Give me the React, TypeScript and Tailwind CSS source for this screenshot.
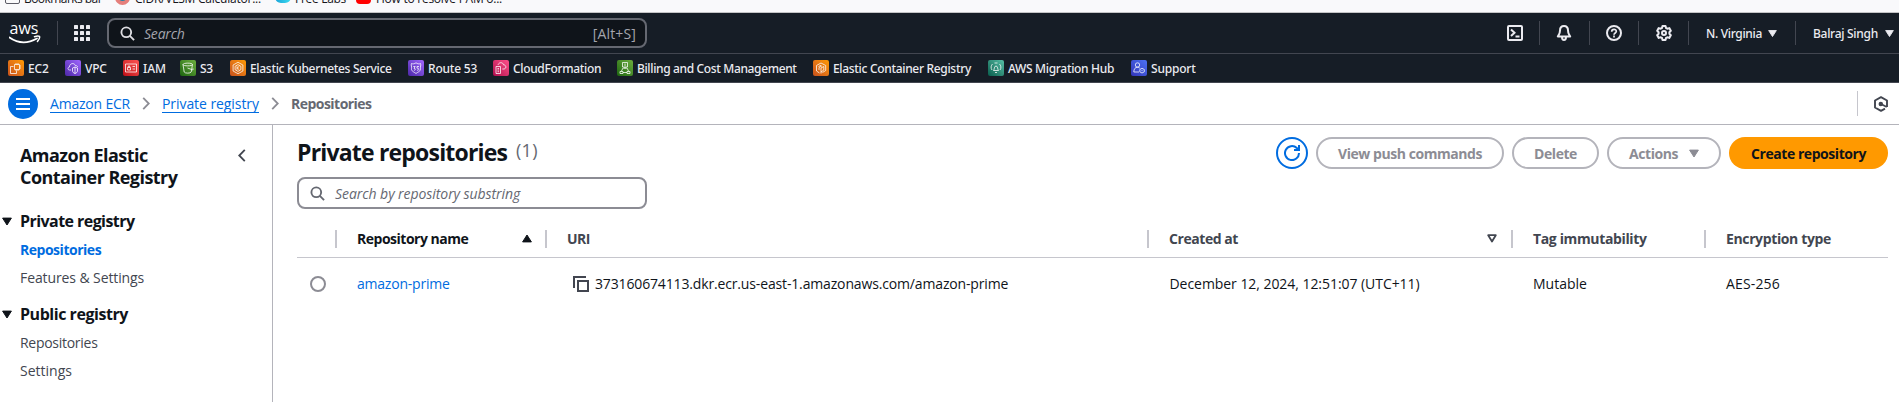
import type { ReactNode } from "react";

function SearchIcon({ className }: { className: string }) {
  return (
    <svg viewBox="0 0 16 16" className={className} fill="none" stroke="currentColor" strokeWidth="2">
      <circle cx="6.7" cy="6.7" r="5.2" />
      <path d="M10.5 10.5 15 15" />
    </svg>
  );
}

function Triangle({ className }: { className: string }) {
  return (
    <svg viewBox="0 0 10 8" className={className} fill="currentColor" stroke="currentColor" strokeWidth="1" strokeLinejoin="round">
      <path d="M.6.6h8.8L5 7.5z" />
    </svg>
  );
}

function Chevron({ className }: { className: string }) {
  return (
    <svg viewBox="0 0 8 14" className={className} fill="none" stroke="currentColor" strokeWidth="2">
      <path d="m1 1 6 6-6 6" />
    </svg>
  );
}

type Service = { name: string; cell: string; tile: string; text: string; glyph: ReactNode };

const orange = "bg-linear-to-tr from-[#c8511b] to-[#ff9900]";
const purple = "bg-linear-to-tr from-[#4d27a8] to-[#a166ff]";
const green = "bg-linear-to-tr from-[#1b660f] to-[#6cae3e]";

const services: Service[] = [
  {
    name: "EC2", cell: "w-[57px]", tile: orange, text: "tracking-[-0.2px]",
    glyph: <path d="M6.5 4.5h5v5h-5zM5.5 6.5h-3v7h6v-3M8 3v1.5M10 3v1.5M13 6h-1.5M13 8h-1.5M8 9.5V11M10 9.5V11" />,
  },
  {
    name: "VPC", cell: "w-[58px]", tile: purple, text: "tracking-[-0.2px]",
    glyph: <path d="M6 10H4.5C2.500 10 2.500 7 4.500 7 4.500 3 9.500 2.500 10.300 5.500 11.500 5.500 12.500 6 12.700 7M7.500 8l2.500-1 2.500 1v3c0 1-1 2-2.500 2.500C8.500 13 7.500 12 7.500 11zM10 7v6.500" />,
  },
  {
    name: "IAM", cell: "w-[57px]", tile: "bg-linear-to-tr from-[#bd0816] to-[#ff5252]", text: "tracking-[-0.1px]",
    glyph: <path d="M2.500 4h11v8h-11zM4.500 7.500h3v2.500h-3zM5.300 7.500V6h1.400v1.500M9.500 6.500h2.500M9.500 9h2.500" />,
  },
  {
    name: "S3", cell: "w-[50px]", tile: green, text: "tracking-[-0.3px]",
    glyph: <path d="M3 4.500c0-1.800 9.500-1.800 9.500 0s-9.500 1.800-9.500 0l1.200 7.500c.5 1.500 6.500 1.500 7 0l1.300-7.500M7.500 8l5 1.800c1 .2.800-1 .3-1.500" />,
  },
  {
    name: "Elastic Kubernetes Service", cell: "w-[178px]", tile: orange, text: "tracking-[-0.31px]",
    glyph: <path d="M8 2.300 12.900 5v6L8 13.700 3.100 11V5zM8 4.600 10.900 6.300v3.400L8 11.400 5.100 9.700V6.300zM7 6.300v3.400M9.300 6.300 7.200 8l2.100 1.700" />,
  },
  {
    name: "Route 53", cell: "w-[85px]", tile: purple, text: "tracking-[-0.2px]",
    glyph: <path d="M3.500 3.500c1.500.8 3 .3 4.500-.7 1.500 1 3 1.500 4.500.7.800 2-.5 3 0 5 .5 2.500-2.500 3.500-4.500 5-2-1.500-5-2.500-4.500-5 .5-2-.800-3 0-5zM5.300 6.500h1.900L6 8.300c1.800-.2 1.800 2 0 2M11 6.500H9v1.700c2.500-.4 2.500 2.300 0 2" />,
  },
  {
    name: "CloudFormation", cell: "w-[124px]", tile: "bg-linear-to-tr from-[#b0084d] to-[#ff4f8b]", text: "tracking-[-0.34px]",
    glyph: <path d="M3 6.500h4.500v7H3zM4.500 8.500h1.500M4.500 10h1.500M4.500 11.700h1.500M5 4.800C6 2 10 2 10.500 4.800c2.500-.2 3.500 3.700.5 4.200H9.300" />,
  },
  {
    name: "Billing and Cost Management", cell: "w-[196px]", tile: green, text: "tracking-[-0.36px]",
    glyph: <path d="M5.500 2.500h5v4.500h-5zM8 3.500v2.500M8 7v2M4.500 11 6 8h4l1.500 3M3 11.500h3v2H3zM10 11.500h3v2h-3zM6 12.500h4" />,
  },
  {
    name: "Elastic Container Registry", cell: "w-[175px]", tile: orange, text: "tracking-[-0.32px]",
    glyph: <path d="M6.500 13 3.500 11V5.500L8 3l4.700 2.500v5L9.500 12.500M6 10V7.500l3-1.700M8 13.500V8l2.800-1.500V10L8 12M5.500 6.500 8 5.300" />,
  },
  {
    name: "AWS Migration Hub", cell: "w-[143px]", tile: "bg-linear-to-tr from-[#055f4e] to-[#56c0a7]", text: "tracking-[-0.32px]",
    glyph: <path d="M5.500 10.500c1-1 .5-4.500 2.500-4.500s1.500 3.500 2.500 4.500zM7 12.500h2M4 10C2.500 8 3 5.500 4.500 4M12 10c1.500-2 1-4.500-.5-6M6.500 3h3" />,
  },
  {
    name: "Support", cell: "w-[80px]", tile: "bg-linear-to-tr from-[#3334b9] to-[#4d72f3]", text: "tracking-[-0.21px]",
    glyph: <path d="M6.500 2.800a2.200 2.200 0 1 1 0 4.400 2.200 2.200 0 0 1 0-4.400zM8 12H2.800c0-3 1.500-4.800 3.700-4.800 1 0 1.700.4 2.300 1M11 8.300l2.300 1.200v2.300L11 13l-2.200-1.200V9.500zM10.500 10.600h1" />,
  },
];

function BookmarkBar() {
  const label = "absolute -top-[9px] text-[12px] leading-[16px] whitespace-nowrap text-[#15141a]";
  return (
    <div className="relative h-[13px] shrink-0 overflow-hidden border-b border-[#c4c4c6] bg-[#f9f9fb]">
      <div className="absolute -top-[10px] left-[5px] h-[14px] w-[15px] rounded-[2px] border-[1.500px] border-[#5b5b66]" />
      <span className={`${label} left-[24px] tracking-[-0.55px]`}>Bookmarks bar</span>
      <div className="absolute -top-[10px] left-[115px] size-[15px] rounded-full border-[4px] border-[#e57f7b] bg-[#2483a6]" />
      <span className={`${label} left-[135px] tracking-[-0.23px]`}>CIDR/VLSM Calculator...</span>
      <div className="absolute -top-[9px] left-[275px] h-[12px] w-[16px] rounded-full bg-linear-to-r from-[#1aa3d8] to-[#3ddcf0]" />
      <span className={`${label} left-[295px] tracking-[-0.3px]`}>Free Labs</span>
      <div className="absolute -top-[8px] left-[356px] h-[12px] w-[15px] rounded-[4px] bg-[#f00]" />
      <span className={`${label} left-[376px] tracking-[-0.26px]`}>How to resolve PAM o...</span>
    </div>
  );
}

function VLine({ className }: { className: string }) {
  return <div className={`h-[24px] w-px shrink-0 bg-[#424650] ${className}`} />;
}

function TopBar() {
  return (
    <div className="flex h-[40px] shrink-0 items-center bg-[#161d26] text-[#ebebf0]">
      <svg viewBox="0 0 32 22" className="mt-[2px] ml-[9px] h-[22px] w-[32px] shrink-0">
        <text x="0.500" y="11" fontSize="16" fontWeight="500" fill="#fff" textLength="29" lengthAdjust="spacingAndGlyphs" fontFamily="Open Sans, sans-serif">aws</text>
        <path d="M.5 14.500c8.500 6 18.500 6 27.500 1" fill="none" stroke="#fff" strokeWidth="1.700" strokeLinecap="round" />
        <path d="M25.500 13.800c2-.9 4.300-.9 5-.4.3 1-.5 3.500-2 5" fill="none" stroke="#fff" strokeWidth="1.500" strokeLinecap="round" />
      </svg>
      <VLine className="ml-[16px]" />
      <svg viewBox="0 0 16 16" className="ml-[16px] size-[16px] shrink-0" fill="currentColor">
        {[0, 6, 12].map((y) => [0, 6, 12].map((x) => <rect key={`${x}-${y}`} x={x} y={y} width="4" height="4" rx=".6" />))}
      </svg>
      <div className="ml-[17px] flex h-[30px] w-[540px] items-center rounded-[8px] border-2 border-[#656871] bg-[#0f141a] pr-[9px] pl-[11px]">
        <SearchIcon className="size-[15px] text-[#dedee3]" />
        <span className="ml-[9px] text-[14px] tracking-[-0.2px] text-[#a4a4ad] italic">Search</span>
        <span className="ml-auto text-[14px] tracking-[0.15px] text-[#a4a4ad]">[Alt+S]</span>
      </div>
      <svg viewBox="0 0 16 16" className="ml-[860px] size-[16px] shrink-0" fill="none" stroke="currentColor" strokeWidth="2">
        <rect x="1" y="1" width="14" height="14" rx="1" />
        <path d="m4 4.500 3.500 3.300L4 11M8.500 11.500H12.500" />
      </svg>
      <VLine className="ml-[16px]" />
      <svg viewBox="0 0 16 16" className="ml-[16px] size-[16px] shrink-0" fill="none" stroke="currentColor" strokeWidth="2" strokeLinejoin="round">
        <path d="M8 1C5.500 1 4 3 4 5.500 4 8.500 3.300 9 1.800 11.500h12.400C12.700 9 12 8.500 12 5.500 12 3 10.500 1 8 1zM6 12c0 4 4 4 4 0" />
      </svg>
      <VLine className="ml-[17px]" />
      <svg viewBox="0 0 16 16" className="ml-[16px] size-[16px] shrink-0" fill="none" stroke="currentColor" strokeWidth="2">
        <circle cx="8" cy="8" r="7" />
        <path d="M5.700 6.800C5.700 3.600 10.400 3.800 10.300 6.500 10.200 8 8 8 8 9.800M8 10.500v2" strokeWidth="1.700" />
      </svg>
      <VLine className="ml-[16px]" />
      <svg viewBox="0 0 16 16" className="ml-[17px] size-[16px] shrink-0" fill="none" stroke="currentColor" strokeWidth="2" strokeLinejoin="round">
        <path d="M6.500 1h3l.5 2 1.300.7 2-.6 1.500 2.600L13.400 7.200v1.600l1.400 1.500-1.500 2.600-2-.6L10 13l-.5 2h-3L6 13l-1.300-.7-2 .6-1.500-2.600L2.600 8.800V7.200L1.200 5.700l1.500-2.600 2 .6L6 3z" />
        <circle cx="8" cy="8" r="2" />
      </svg>
      <VLine className="ml-[16px]" />
      <div className="flex w-[106px] items-center pt-px pl-[17px] font-[Noto_Sans] text-[12px] font-medium">
        <span className="w-[62px] tracking-[-0.33px] whitespace-nowrap">N. Virginia</span>
        <Triangle className="mb-px h-[7px] w-[9px]" />
      </div>
      <VLine className="" />
      <div className="flex items-center pt-px pl-[17px] font-[Noto_Sans] text-[12px] font-medium">
        <span className="w-[72px] tracking-[-0.28px] whitespace-nowrap">Balraj Singh</span>
        <Triangle className="mb-px h-[7px] w-[9px]" />
      </div>
    </div>
  );
}

function FavoritesBar() {
  return (
    <div className="flex h-[30px] shrink-0 items-center border-y border-[#424650] bg-[#161d26] pl-[8px] font-[Noto_Sans] text-[12px] font-medium text-[#ebebf0]">
      {services.map((s) => (
        <div key={s.name} className={`flex shrink-0 items-center gap-[4px] ${s.cell}`}>
          <div className={`size-[16px] shrink-0 rounded-[2px] ${s.tile}`}>
            <svg viewBox="0 0 16 16" className="size-[16px]" fill="none" stroke="#fff" strokeOpacity=".85" strokeWidth=".9">{s.glyph}</svg>
          </div>
          <span className={`mt-[2px] whitespace-nowrap ${s.text}`}>{s.name}</span>
        </div>
      ))}
    </div>
  );
}

function Breadcrumbs() {
  return (
    <div className="flex h-[42px] shrink-0 items-center border-b border-[#b4b4bb] text-[14px]">
      <div className="ml-[8px] flex size-[30px] items-center justify-center rounded-full bg-[#006ce0]">
        <svg viewBox="0 0 14 12" className="h-[12px] w-[14px]" stroke="#fff" strokeWidth="2"><path d="M0 1h14M0 6h14M0 11h14" /></svg>
      </div>
      <div className="mt-px ml-[12px] flex h-[18px] w-[80px] items-center border-b border-[#006ce0] tracking-[-0.2px] whitespace-nowrap text-[#006ce0]">Amazon ECR</div>
      <Chevron className="ml-[12px] h-[13px] w-[8px] text-[#8c8c94]" />
      <div className="mt-px ml-[12px] flex h-[18px] w-[97px] items-center border-b border-[#006ce0] tracking-[-0.07px] whitespace-nowrap text-[#006ce0]">Private registry</div>
      <Chevron className="ml-[12px] h-[13px] w-[8px] text-[#8c8c94]" />
      <span className="ml-[12px] font-bold tracking-[-0.53px] text-[#656871]">Repositories</span>
      <div className="ml-auto h-[25px] w-px bg-[#c6c6cd]" />
      <svg viewBox="0 0 16 16" className="mr-[10px] ml-[15px] size-[16px] text-[#424650]" fill="none" stroke="currentColor" strokeWidth="1.900" strokeLinejoin="round">
        <path d="M14 11V4.500L8 1.200 2 4.500v7l6 3.300 4-2.200" />
        <circle cx="7.800" cy="8" r="1.300" fill="currentColor" />
        <path d="m8 8 5.800 3" />
      </svg>
    </div>
  );
}

function NavSection({ title, titleClass, children }: { title: string; titleClass: string; children: ReactNode }) {
  return (
    <div className="mb-[10px]">
      <div className="flex h-[24px] items-center">
        <Triangle className="mr-[8px] ml-[2px] h-[9px] w-[10px] text-[#0f141a]" />
        <span className={`text-[16px] font-bold text-[#0f141a] ${titleClass}`}>{title}</span>
      </div>
      <div className="mt-[3px] pl-[20px] text-[14px] leading-[28px] text-[#424650]">{children}</div>
    </div>
  );
}

function Sidebar() {
  return (
    <aside className="w-[273px] shrink-0 border-r border-[#b4b4bb] pt-[19px]">
      <div className="mb-[21px] flex pl-[20px]">
        <h2 className="w-[218px] text-[18px] leading-[22px] font-bold tracking-[-0.55px] text-[#0f141a]">
          Amazon Elastic
          <br />
          Container Registry
        </h2>
        <Chevron className="mt-[5px] h-[13px] w-[8px] rotate-180 text-[#424650]" />
      </div>
      <NavSection title="Private registry" titleClass="tracking-[-0.56px]">
        <div className="font-bold tracking-[-0.48px] text-[#006ce0]">Repositories</div>
        <div className="tracking-[-0.1px]">Features &amp; Settings</div>
      </NavSection>
      <NavSection title="Public registry" titleClass="tracking-[-0.46px]">
        <div className="tracking-[-0.28px]">Repositories</div>
        <div>Settings</div>
      </NavSection>
    </aside>
  );
}

const outlined = "flex h-[32px] items-center justify-center rounded-full border-2 border-[#b4b4bb] text-[14px] font-bold whitespace-nowrap text-[#8c8c94]";

function Toolbar() {
  return (
    <div className="flex h-[32px]">
      <h1 className="-mt-px flex text-[23px] leading-[33px] font-bold tracking-[-0.81px] whitespace-nowrap text-[#0f141a]">
        <span className="w-[219px]">Private repositories</span>
        <span className="-mt-[2px] text-[18px] font-normal tracking-[0.3px] text-[#656871]">(1)</span>
      </h1>
      <div className="ml-auto flex">
        <div className="flex size-[32px] items-center justify-center rounded-full border-2 border-[#006ce0] text-[#006ce0]">
          <svg viewBox="0 0 16 16" className="size-[16px]" fill="none" stroke="currentColor" strokeWidth="2">
            <path d="M15 8a7 7 0 1 1-2.200-5L14 4.500M15 0v5h-5" />
          </svg>
        </div>
        <div className={`${outlined} ml-[8px] w-[188px] tracking-[-0.44px]`}>View push commands</div>
        <div className={`${outlined} ml-[8px] w-[87px] tracking-[-0.44px]`}>Delete</div>
        <div className={`${outlined} ml-[8px] w-[114px] gap-[11px] tracking-[-0.44px]`}>
          Actions
          <Triangle className="h-[9px] w-[10px]" />
        </div>
        <div className="ml-[8px] flex h-[32px] w-[159px] items-center justify-center rounded-full bg-[#ff9900] text-[14px] font-bold tracking-[-0.44px] whitespace-nowrap text-[#0f141a]">Create repository</div>
      </div>
    </div>
  );
}

const columns = "grid grid-cols-[38px_210px_602px_364px_193px_1fr]";

function HeadCell({ className, children }: { className: string; children: ReactNode }) {
  return <div className={`flex h-[18px] items-center border-l-2 border-[#c6c6cd] pb-[2px] pl-[20px] whitespace-nowrap ${className}`}>{children}</div>;
}

function RepositoryTable() {
  return (
    <div className="mt-[21px] text-[14px]">
      <div className={`${columns} h-[28px] border-b border-[#c6c6cd] font-bold text-[#424650]`}>
        <div />
        <HeadCell className="tracking-[-0.49px] text-[#0f141a]">
          Repository name
          <Triangle className="mt-px mr-[13px] ml-auto h-[9px] w-[10px] rotate-180" />
        </HeadCell>
        <HeadCell className="tracking-[-0.5px]">URI</HeadCell>
        <HeadCell className="tracking-[-0.44px]">
          Created at
          <svg viewBox="0 0 10 9" className="mt-px mr-[14px] ml-auto h-[9px] w-[10px]" fill="none" stroke="currentColor" strokeWidth="1.800" strokeLinejoin="round">
            <path d="M1.200 1.200h7.600L5 7.500z" />
          </svg>
        </HeadCell>
        <HeadCell className="tracking-[-0.36px]">Tag immutability</HeadCell>
        <HeadCell className="tracking-[-0.37px]">Encryption type</HeadCell>
      </div>
      <div className={`${columns} h-[52px] items-center whitespace-nowrap text-[#0f141a]`}>
        <div className="ml-[13px] size-[16px] rounded-full border-2 border-[#8c8c94]" />
        <div className="pb-[2px] pl-[22px] tracking-[-0.22px] text-[#006ce0]">amazon-prime</div>
        <div className="flex items-center pb-[2px] pl-[28px] tracking-[-0.15px]">
          <svg viewBox="0 0 16 16" className="mt-[2px] mr-[6px] size-[16px] text-[#424650]" fill="none" stroke="currentColor" strokeWidth="2">
            <path d="M5 5h10v10H5zM1 12V1h12" />
          </svg>
          373160674113.dkr.ecr.us-east-1.amazonaws.com/amazon-prime
        </div>
        <div className="pb-[2px] pl-[22.500px] tracking-[-0.05px]">December 12, 2024, 12:51:07 (UTC+11)</div>
        <div className="pb-[2px] pl-[22px]">Mutable</div>
        <div className="pb-[2px] pl-[22px] tracking-[0.15px]">AES-256</div>
      </div>
    </div>
  );
}

export default function App() {
  return (
    <div className="flex h-[402px] w-full flex-col overflow-hidden bg-white font-[Open_Sans,sans-serif]">
      <BookmarkBar />
      <TopBar />
      <FavoritesBar />
      <Breadcrumbs />
      <div className="flex min-h-0 flex-1">
        <Sidebar />
        <main className="min-w-0 flex-1 pt-[12px] pr-[11px] pl-[24px]">
          <Toolbar />
          <div className="mt-[8px] flex h-[32px] w-[350px] items-center rounded-[8px] border-2 border-[#8c8c94] pl-[11px]">
            <SearchIcon className="size-[15px] text-[#656871]" />
            <span className="ml-[10px] text-[14px] tracking-[-0.06px] text-[#656871] italic">Search by repository substring</span>
          </div>
          <RepositoryTable />
        </main>
      </div>
    </div>
  );
}
